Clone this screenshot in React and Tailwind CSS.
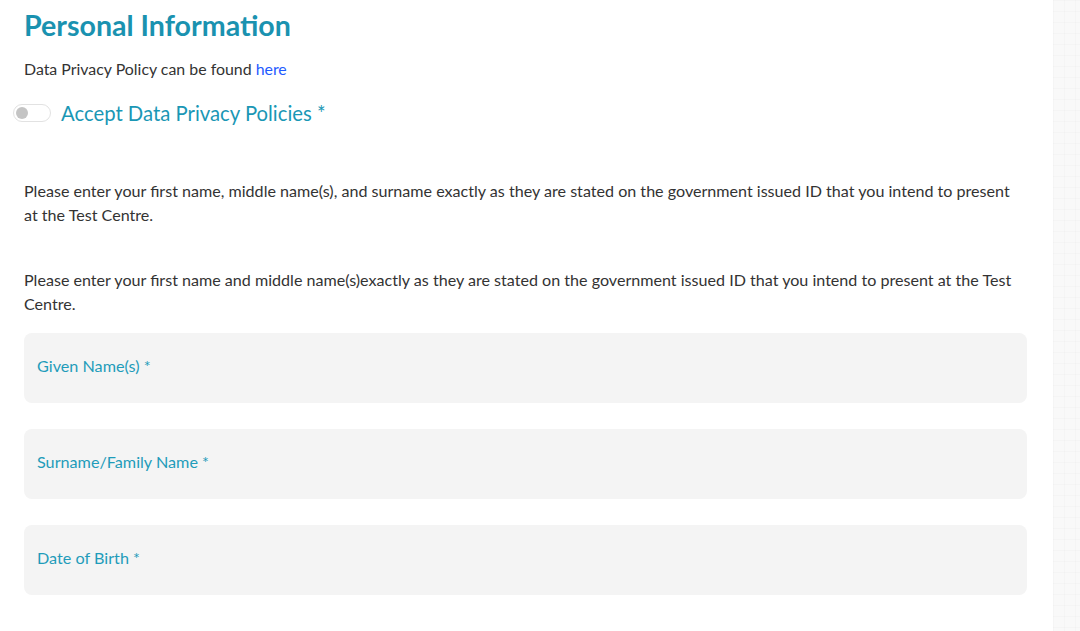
import { useState } from "react";

const fields = ["Given Name(s) *", "Surname/Family Name *", "Date of Birth *"];

export default function App() {
  const [accepted, setAccepted] = useState(false);

  return (
    <div className="flex h-[631px] w-[1080px] overflow-hidden bg-white font-['Lato','Noto_Sans',sans-serif]">
      {/* Main form */}
      <div className="w-[1053px] shrink-0 bg-white pl-[24px] pr-[26px]">
        <h1 className="pt-[7px] text-[28.6px] font-bold leading-[36px] text-[#1a92b0]">
          Personal Information
        </h1>
        <p className="mt-[14px] text-[15.9px] leading-[24px] text-[#333]">
          Data Privacy Policy can be found{" "}
          <a href="#" className="text-[#1f5bff]">
            here
          </a>
        </p>

        <div className="-ml-[11px] mt-[19px] flex items-center gap-[10px]">
          <button
            type="button"
            onClick={() => setAccepted(!accepted)}
            className="relative h-[18px] w-[38px] rounded-full border border-[#e2e2e2] bg-white"
          >
            <span className="absolute left-[2px] top-[2px] h-[12px] w-[12px] rounded-full bg-[#c4c4c4]" />
          </button>
          <span className="text-[20.3px] leading-[26px] text-[#1a97b5]">
            Accept Data Privacy Policies *
          </span>
        </div>

        <div className="mr-[7px]">
          <p className="mt-[53px] text-[16.1px] leading-[24px] text-[#333]">
            Please enter your first name, middle name(s), and surname exactly as they are stated on the government
            issued ID that you intend to present at the Test Centre.
          </p>
          <p className="mt-[41px] text-[16.1px] leading-[24px] text-[#333]">
            Please enter your first name and middle name(s)exactly as they are stated on the government issued ID
            that you intend to present at the Test Centre.
          </p>
        </div>

        <div className="mt-[17px] flex flex-col gap-[26px]">
          {fields.map((f) => (
            <div key={f} className="flex h-[70px] items-center rounded-[8px] bg-[#f4f4f4] px-[13px] pb-[4px]">
              <span className="text-[16.2px] text-[#1f9cba]">{f}</span>
            </div>
          ))}
        </div>
      </div>

      {/* Patterned side background */}
      <div className="flex-1 bg-[#f9f9f9] bg-[linear-gradient(rgba(0,0,0,0.015)_1px,transparent_1px),linear-gradient(90deg,rgba(0,0,0,0.015)_1px,transparent_1px)] bg-[size:11px_11px]" />
    </div>
  );
}
